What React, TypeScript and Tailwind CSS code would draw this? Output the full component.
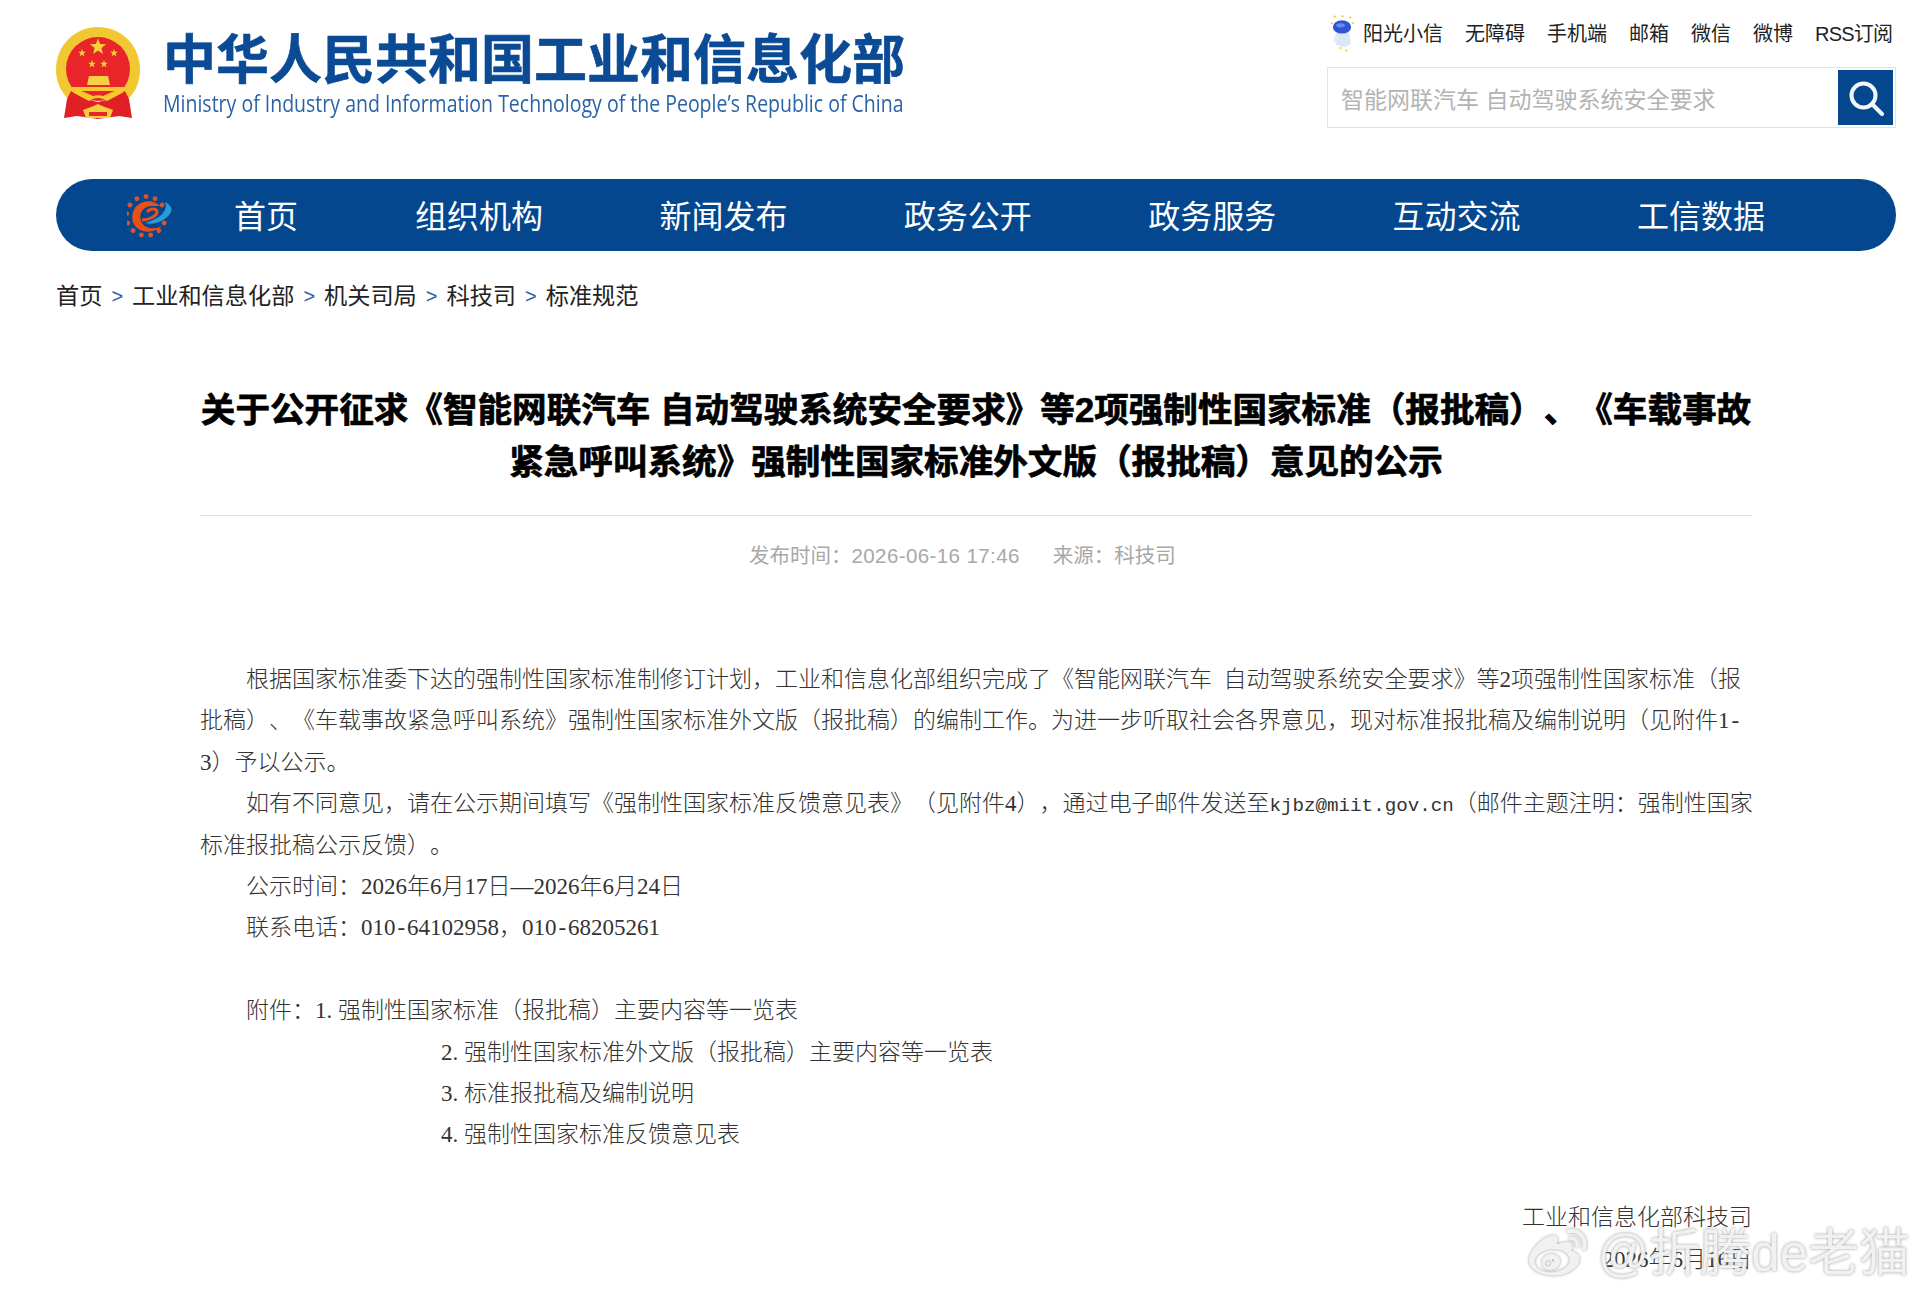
import { FaWeibo } from 'react-icons/fa';

const sans = 'font-["Liberation_Sans","Noto_Sans_CJK_SC",sans-serif]';

const navItems = ['首页', '组织机构', '新闻发布', '政务公开', '政务服务', '互动交流', '工信数据'];
const topLinks = ['无障碍', '手机端', '邮箱', '微信', '微博'];
const crumbs = ['工业和信息化部', '机关司局', '科技司', '标准规范'];

function Star({ x, y, r }: { x: number; y: number; r: number }) {
  const pts = Array.from({ length: 10 }, (_, i) => {
    const a = -Math.PI / 2 + (i * Math.PI) / 5;
    const d = i % 2 === 0 ? r : r * 0.42;
    return `${x + d * Math.cos(a)},${y + d * Math.sin(a)}`;
  }).join(' ');
  return <polygon points={pts} fill="#fbd235" />;
}

function Emblem() {
  return (
    <svg width="85" height="93" viewBox="0 0 85 93" className="shrink-0">
      <path d="M42 0C20 0 0 17 0 43c0 12 5 21 11 28h62c7-7 11-17 11-28C84 17 64 0 42 0Z" fill="#f2c832" />
      <circle cx="42" cy="42" r="32" fill="#e8262a" />
      <path d="M11 72l4-8 15 8 12 3 12-3 15-8 4 8 3 19-13-2-21 3-21-3-13 2Z" fill="#e11f26" />
      <Star x={42} y={20} r={8.5} />
      <Star x={26} y={26} r={4} />
      <Star x={58} y={26} r={4} />
      <Star x={36} y={37} r={4} />
      <Star x={48} y={37} r={4} />
      <path d="M33 49h19l2 9H31Z" fill="#f7d046" />
      <path d="M16 60h52c1 3 0 5-2 6-6 3-11 6-15 8-3-2-6-3-9-3s-6 1-9 3c-4-2-9-5-15-8-2-1-3-3-2-6Z" fill="#f7c92f" />
      <path d="M25 64h34c-5 2-8 3-12 5-3-1-7-1-10 0-4-2-7-3-12-5Z" fill="#e8262a" />
      <path d="M27 83c4-2 9-3 15-6 6 3 11 4 15 6l-3 8H30Z" fill="#f6cf3d" />
      <path d="M33 85h18v4H33Z" fill="#e8262a" />
    </svg>
  );
}

function NavLogo() {
  const teeth = Array.from({ length: 13 }, (_, i) => (i * 360) / 13);
  return (
    <svg width="48" height="46" viewBox="0 0 48 46" className="shrink-0">
      {teeth.map((a) => (
        <circle key={a} cx="19" cy="4.5" r="2.4" fill="#d9532e" transform={`rotate(${a} 19 24)`} />
      ))}
      <path d="M33 14C26 6 10 8 6 20 2 34 14 42 26 39c4-1 7-3 9-5-8 4-18 3-21-5-3-9 4-16 12-15 3 0 5 0 7 0Z" fill="#ea4f16" />
      <path d="M15 28c7 0 15-4 15-8s-7-4-10 0" fill="none" stroke="#ea4f16" strokeWidth="3" />
      <path d="M18 31c10 3 22-3 26-11 2-4-2-8-6-10 3 7-3 14-10 17-4 2-7 3-10 4Z" fill="#2b9ad8" />
    </svg>
  );
}

function Mascot() {
  return (
    <svg width="25" height="38" viewBox="0 0 26 46" preserveAspectRatio="none" className="shrink-0">
      <circle cx="5" cy="2" r="1.3" fill="#f6c945" />
      <circle cx="13" cy="1.5" r="1.3" fill="#f6c945" />
      <circle cx="21" cy="3" r="1.3" fill="#f6c945" />
      <circle cx="2" cy="10" r="1.2" fill="#f6c945" />
      <circle cx="24" cy="10" r="1.2" fill="#f6c945" />
      <circle cx="11" cy="40" r="1.3" fill="#f6c945" />
      <circle cx="17" cy="43" r="1.3" fill="#f6c945" />
      <path d="M6 21h14l2 14-7 4-9-3Z" fill="#dde8f6" />
      <path d="M6 24l-3 7 3 2 3-6Z" fill="#e6edf8" />
      <ellipse cx="12.5" cy="14.5" rx="9.5" ry="8" fill="#2f55d0" />
      <ellipse cx="11" cy="12.5" rx="4.5" ry="2.5" fill="#6c8aec" />
    </svg>
  );
}

function Header() {
  return (
    <header className="flex h-[179px] justify-between pl-[56px] pr-[29px]">
      <div className="flex items-start gap-[22px] pt-[27px]">
        <Emblem />
        <div className="pt-[4px]">
          <div className={`${sans} whitespace-nowrap text-[53px] font-bold leading-[59px] text-[#0b4a94] [-webkit-text-stroke:0.6px_#0b4a94]`}>
            中华人民共和国工业和信息化部
          </div>
          <div className="origin-left scale-x-[0.848] whitespace-nowrap font-['Open_Sans',sans-serif] text-[23px] leading-[26px] text-[#2c63a6]">
            Ministry of Industry and Information Technology of the People’s Republic of China
          </div>
        </div>
      </div>
      <div className="w-[569px] pt-[11px]">
        <div className={`${sans} flex h-[46px] items-center gap-[22px] whitespace-nowrap pl-[3px] text-[20px] text-[#222]`}>
          <div className="flex items-center gap-[8px]">
            <Mascot />
            <span>阳光小信</span>
          </div>
          {topLinks.map((t) => (
            <span key={t}>{t}</span>
          ))}
          <span className="tracking-[-0.8px]">RSS订阅</span>
        </div>
        <div className="mt-[10px] flex h-[61px] items-center justify-between border border-[#e3e3e3] pl-[13px] pr-[2px]">
          <span className={`${sans} pt-[5px] text-[23px] text-[#b3b3b3]`}>智能网联汽车 自动驾驶系统安全要求</span>
          <div className="flex h-[55px] w-[55px] items-center justify-center bg-[#04478f]">
            <svg width="36" height="36" viewBox="0 0 36 36" fill="none" stroke="#f2f5f9" strokeWidth="4">
              <circle cx="15.5" cy="15.5" r="12" />
              <path d="M24 24l10 10" strokeLinecap="round" />
            </svg>
          </div>
        </div>
      </div>
    </header>
  );
}

function Nav() {
  return (
    <nav className="ml-[56px] mr-[29px] flex h-[72px] items-center rounded-[36px] bg-[#04478f]">
      <div className="ml-[71px] mr-[59px]">
        <NavLogo />
      </div>
      {navItems.map((t, i) => (
        <div key={t} className={`${sans} pt-[4px] text-[32px] text-white ${i === 0 ? 'w-[181px]' : 'w-[244.4px]'}`}>
          {t}
        </div>
      ))}
    </nav>
  );
}

function Breadcrumb() {
  return (
    <div className={`${sans} ml-[56px] mt-[27px] flex h-[36px] items-center text-[23.2px] text-[#222]`}>
      <span>首页</span>
      {crumbs.map((c) => (
        <span key={c} className="flex items-center">
          <span className="mx-[9px] text-[20px] text-[#2a5ea8]">&gt;</span>
          <span>{c}</span>
        </span>
      ))}
    </div>
  );
}

// SimSun's latin glyphs are all half an em wide, the serif here is not
function Dot() {
  return <span className="tracking-[5.75px]">.</span>;
}

function Hy() {
  return <span className="inline-block w-[11.5px] indent-0 text-center">-</span>;
}

function Sp() {
  return <span className="tracking-[5.75px]"> </span>;
}

function Article() {
  return (
    <main className="ml-[200px] mr-[173px]">
      <h1 className={`${sans} mt-[70px] whitespace-nowrap text-center text-[34.6px] font-bold leading-[52px] text-black [-webkit-text-stroke:0.7px_#000]`}>
        关于公开征求《智能网联汽车 自动驾驶系统安全要求》等2项强制性国家标准（报批稿）、《车载事故
        <br />
        紧急呼叫系统》强制性国家标准外文版（报批稿）意见的公示
      </h1>
      <div className="mt-[27px] h-px bg-[#e2e2e2]" />
      <div className={`${sans} mt-[25px] flex h-[30px] items-center pl-[549px] text-[20.5px] text-[#a8a8a8]`}>
        <span>
          发布时间：<span className="tracking-[0.4px]">2026-06-16 17:46</span>
        </span>
        <span className="ml-[33px]">来源：科技司</span>
      </div>
      <div className="mt-[88px] whitespace-nowrap font-['Liberation_Serif','Noto_Sans_CJK_SC',serif] text-[23px] font-light leading-[41.4px] text-[#333]">
        <p className="indent-[46px]">
          根据国家标准委下达的强制性国家标准制修订计划，工业和信息化部组织完成了《智能网联汽车
          <Sp />
          自动驾驶系统安全要求》等2项强制性国家标准（报
          <br />
          批稿）、《车载事故紧急呼叫系统》强制性国家标准外文版（报批稿）的编制工作。为进一步听取社会各界意见，现对标准报批稿及编制说明（见附件1
          <Hy />
          <br />
          3）予以公示。
        </p>
        <p className="indent-[46px]">
          如有不同意见，请在公示期间填写《强制性国家标准反馈意见表》（见附件4），通过电子邮件发送至
          <span className="font-['Liberation_Mono',monospace] text-[19.2px] leading-none">kjbz@miit.gov.cn</span>
          （邮件主题注明：强制性国家
          <br />
          标准报批稿公示反馈）。
        </p>
        <p className="pl-[46px]">公示时间：2026年6月17日—2026年6月24日</p>
        <p className="pl-[46px]">
          联系电话：010
          <Hy />
          64102958，010
          <Hy />
          68205261
        </p>
        <p className="h-[41.4px]" />
        <p className="pl-[46px]">
          附件：1
          <Dot />
          强制性国家标准（报批稿）主要内容等一览表
        </p>
        <p className="pl-[241px]">
          2
          <Dot />
          强制性国家标准外文版（报批稿）主要内容等一览表
        </p>
        <p className="pl-[241px]">
          3
          <Dot />
          标准报批稿及编制说明
        </p>
        <p className="pl-[241px]">
          4
          <Dot />
          强制性国家标准反馈意见表
        </p>
        <p className="h-[41.4px]" />
        <p className="text-right">工业和信息化部科技司</p>
        <p className="text-right">2026年6月16日</p>
      </div>
    </main>
  );
}

function Watermark() {
  return (
    <div className={`${sans} absolute bottom-[12px] right-[15px] flex items-center gap-[6px] text-[#f1f1f1] [filter:drop-shadow(0_0_1.5px_#9a9a9a)]`}>
      <FaWeibo className="h-[58px] w-[68px]" />
      <span className="text-[51px] leading-[56px]">@折腾de老猫</span>
    </div>
  );
}

export default function App() {
  return (
    <div className="relative h-[1295px] w-[1925px] overflow-hidden bg-white [text-spacing-trim:space-all]">
      <Header />
      <Nav />
      <Breadcrumb />
      <Article />
      <Watermark />
    </div>
  );
}
